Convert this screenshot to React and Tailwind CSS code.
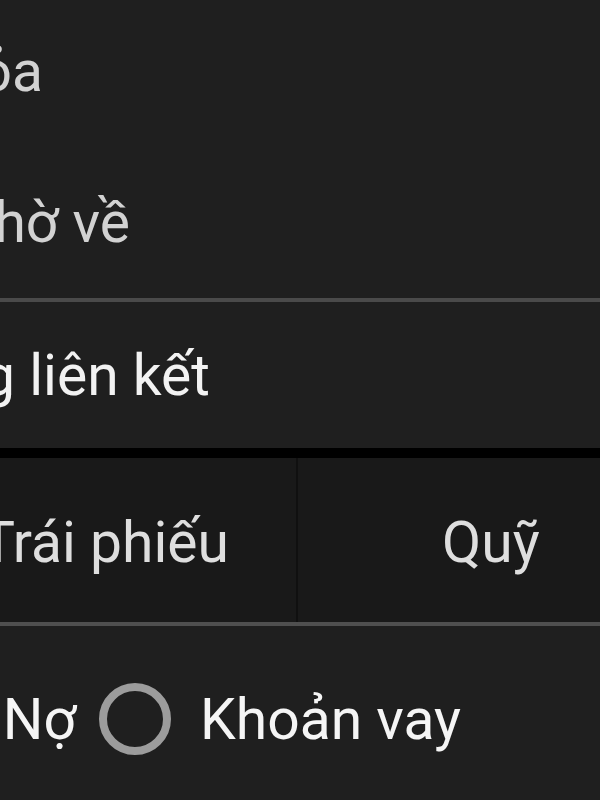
import React from 'react'

const font = { fontFamily: 'Roboto, "Noto Sans", sans-serif' }

const Row = ({ children, end, className }) => (
  <div className={`flex items-center ${className}`}>
    <div className={`flex justify-end whitespace-nowrap ${end}`}>{children}</div>
  </div>
)

const App = () => {
  return (
    <div className="w-[600px] h-[800px] overflow-hidden bg-[#1f1f1f] text-[57px] leading-none" style={font}>
      <Row className="h-[150px] text-[#d2d2d2]" end="w-[43px]">
        <span className="-mt-[8px]">Thỏa</span>
      </Row>
      <Row className="h-[148px] text-[#d2d2d2]" end="w-[130px]">
        <span className="-mt-[4px]">Chờ về</span>
      </Row>
      <div className="h-[4px] bg-[#4a4a4a]" />
      <Row className="h-[146px] text-[#f2f2f2]" end="w-[210px]">
        <span>Tài khoản ngân hàng liên kết</span>
      </Row>
      <div className="h-[10px] bg-black" />
      <div className="flex h-[164px] bg-[#191919] text-[#dedede]">
        <div className="flex w-[298px] shrink-0 items-center justify-end pr-[67px] whitespace-nowrap border-r-2 border-[#101010]">
          <span className="mt-[4px]">Cổ phiếu Trái phiếu</span>
        </div>
        <div className="flex flex-1 items-center pl-[144px]">
          <span className="mt-[4px]">Quỹ</span>
        </div>
      </div>
      <div className="h-[4px] bg-[#4f4f4f]" />
      <div className="flex h-[186px] items-center">
        <div className="flex w-[76px] justify-end whitespace-nowrap text-[#f5f5f5]">
          <span>Nợ</span>
        </div>
        <div className="ml-[23px] h-[72px] w-[72px] rounded-full border-[8px] border-[#9c9c9c]" />
        <span className="ml-[29px] text-[#f5f5f5]">Khoản vay</span>
      </div>
    </div>
  )
}

export default App
